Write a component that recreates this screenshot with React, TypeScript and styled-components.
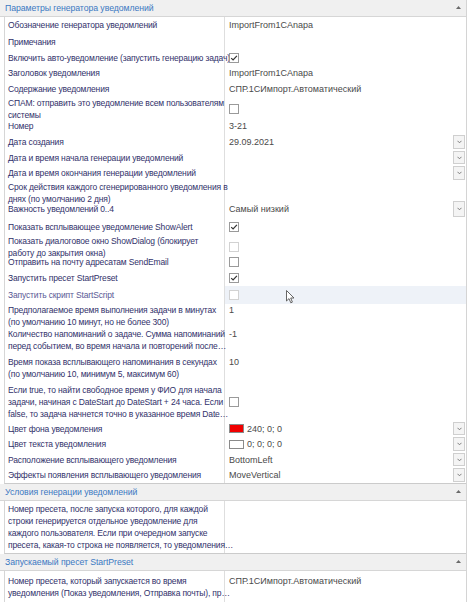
import styled, { createGlobalStyle } from 'styled-components';

const GlobalStyle = createGlobalStyle`
  html, body {
    margin: 0;
    padding: 0;
    background: #ffffff;
  }
  body {
    font-family: 'Liberation Sans', Arial, sans-serif;
  }
`;

type Check = 'on' | 'off' | 'dis';

type RowData = {
  label: string;
  h: number;
  value?: string;
  check?: Check;
  drop?: boolean;
  swatch?: string;
  top?: boolean;
  dim?: boolean;
  hover?: boolean;
};

const mainRows: RowData[] = [
  { label: 'Обозначение генератора уведомлений', h: 16, value: 'ImportFrom1CAnapa' },
  { label: 'Примечания', h: 17 },
  { label: 'Включить авто-уведомление (запустить генерацию задач)', h: 15, check: 'on' },
  { label: 'Заголовок уведомления', h: 16, value: 'ImportFrom1CAnapa' },
  { label: 'Содержание уведомления', h: 16, value: 'СПР.1СИмпорт.Автоматический' },
  { label: 'СПАМ: отправить это уведомление всем пользователям\nсистемы', h: 20, check: 'off' },
  { label: 'Номер', h: 17, value: '3-21' },
  { label: 'Дата создания', h: 16, value: '29.09.2021', drop: true },
  { label: 'Дата и время начала генерации уведомлений', h: 15, drop: true },
  { label: 'Дата и время окончания генерации уведомлений', h: 16, drop: true },
  { label: 'Срок действия каждого сгенерированного уведомления в\nднях (по умолчанию 2 дня)', h: 19 },
  { label: 'Важность уведомлений 0..4', h: 18, value: 'Самый низкий', drop: true },
  { label: 'Показать всплывающее уведомление ShowAlert', h: 17, check: 'on' },
  { label: 'Показать диалоговое окно ShowDialog (блокирует\nработу до закрытия окна)', h: 18, check: 'dis' },
  { label: 'Отправить на почту адресатам SendEmail', h: 17, check: 'off' },
  { label: 'Запустить пресет StartPreset', h: 16, check: 'on' },
  { label: 'Запустить скрипт StartScript', h: 18, check: 'dis', dim: true, hover: true },
  { label: 'Предполагаемое время выполнения задачи в минутах\n(по умолчанию 10 минут, но не более 300)', h: 22, value: '1', top: true },
  { label: 'Количество напоминаний о задаче. Сумма напоминаний\nперед событием, во время начала и повторений после…', h: 27, value: '-1', top: true },
  { label: 'Время показа всплывающего напоминания в секундах\n(по умолчанию 10, минимум 5, максимум 60)', h: 30, value: '10', top: true },
  { label: 'Если true, то найти свободное время у ФИО для начала\nзадачи, начиная с DateStart до DateStart + 24 часа. Если\nfalse, то задача начнется точно в указанное время Date…', h: 38, check: 'off' },
  { label: 'Цвет фона уведомления', h: 15, value: '240; 0; 0', swatch: '#f00000', drop: true },
  { label: 'Цвет текста уведомления', h: 16, value: '0; 0; 0; 0', swatch: '#ffffff', drop: true },
  { label: 'Расположение всплывающего уведомления', h: 15, value: 'BottomLeft', drop: true },
  { label: 'Эффекты появления всплывающего уведомления', h: 16, value: 'MoveVertical', drop: true },
];

const conditionRows: RowData[] = [
  {
    label:
      'Номер пресета, после запуска которого, для каждой\nстроки генерируется отдельное уведомление для\nкаждого пользователя. Если при очередном запуске\nпресета, какая-то строка не появляется, то уведомления…',
    h: 52,
  },
];

const presetRows: RowData[] = [
  {
    label: 'Номер пресета, который запускается во время\nуведомления (Показ уведомления, Отправка почты), пр…',
    h: 31,
    value: 'СПР.1СИмпорт.Автоматический',
    top: true,
  },
];

const CheckBox = ({ state }: { state: Check }) => (
  <svg width="10" height="10" viewBox="0 0 10 10">
    <rect
      x="0.5"
      y="0.5"
      width="9"
      height="9"
      fill="#ffffff"
      stroke={state === 'dis' ? '#d2d2d2' : '#9a9a9a'}
    />
    {state === 'on' && (
      <path d="M2.2 5.1 L4.1 7 L7.9 2.8" fill="none" stroke="#333333" strokeWidth="1.2" />
    )}
  </svg>
);

const Chevron = () => (
  <svg width="5" height="4" viewBox="0 0 5 4">
    <path d="M0.5 0.8 L2.5 2.8 L4.5 0.8" fill="none" stroke="#707070" strokeWidth="0.9" />
  </svg>
);

const UpArrow = () => (
  <svg width="5" height="3" viewBox="0 0 5 3">
    <path d="M0 3 L2.5 0 L5 3 Z" fill="#6a6a6a" />
  </svg>
);

const Pointer = () => (
  <svg width="10" height="14" viewBox="0 0 10 14">
    <path
      d="M0.5 0.5 L0.5 11 L3 8.6 L4.8 12.8 L6.4 12.1 L4.7 8 L8 8 Z"
      fill="#ffffff"
      stroke="#555555"
      strokeWidth="0.9"
      strokeLinejoin="round"
    />
  </svg>
);

const Row = ({ row }: { row: RowData }) => {
  const lines = row.label.split('\n').length;
  const pad = row.top ? Math.max(0, (row.h - lines * 12) / 2) : 0;
  return (
    <RowLine $h={row.h}>
      <Label $dim={row.dim}>{row.label}</Label>
      <Value $top={row.top} $pad={pad} $hover={row.hover}>
        {row.check && <CheckBox state={row.check} />}
        {row.swatch && <Swatch $color={row.swatch} />}
        {row.value && <ValueText>{row.value}</ValueText>}
        {row.drop && (
          <DropButton>
            <Chevron />
          </DropButton>
        )}
      </Value>
    </RowLine>
  );
};

const Category = ({ title, rows }: { title: string; rows: RowData[] }) => (
  <section>
    <Header>
      <span>{title}</span>
      <UpArrow />
    </Header>
    <Body>
      {rows.map((r, i) => (
        <Row key={i} row={r} />
      ))}
    </Body>
  </section>
);

const App = (): JSX.Element => {
  return (
    <>
      <GlobalStyle />
      <Page>
        <Category title="Параметры генератора уведомлений" rows={mainRows} />
        <Category title="Условия генерации уведомлений" rows={conditionRows} />
        <Category title="Запускаемый пресет StartPreset" rows={presetRows} />
        <Cursor>
          <Pointer />
        </Cursor>
      </Page>
    </>
  );
};

const Page = styled.div`
  box-sizing: border-box;
  height: 602px;
  overflow: hidden;
  position: relative;
  width: 467px;
  border-right: 1px solid #d4d4d4;
  background: #ffffff;
`;

const Header = styled.div`
  align-items: center;
  background: #f0f0f0;
  border-bottom: 1px solid #d6d6d6;
  color: #3b78c2;
  display: flex;
  font-size: 8.7px;
  height: 16px;
  justify-content: space-between;
  letter-spacing: -0.05px;
  padding: 0 5px 0 5px;

  svg {
    margin-bottom: 1px;
  }
`;

const Body = styled.div`
  border-bottom: 1px solid #cbcbcb;
  border-left: 1px solid #d6d6d6;
  margin-left: 4px;
`;

const RowLine = styled.div<{ $h: number }>`
  display: grid;
  grid-template-columns: 220px 1fr;
  height: ${(p) => p.$h}px;
`;

const Label = styled.div<{ $dim?: boolean }>`
  align-items: center;
  border-right: 1px solid #dedede;
  box-sizing: border-box;
  color: ${(p) => (p.$dim ? '#5a5a96' : '#31316a')};
  display: flex;
  font-size: 8.5px;
  letter-spacing: -0.15px;
  line-height: 12px;
  padding-left: 3px;
  white-space: pre;
`;

const Value = styled.div<{ $top?: boolean; $pad: number; $hover?: boolean }>`
  align-items: ${(p) => (p.$top ? 'flex-start' : 'center')};
  background: ${(p) => (p.$hover ? '#eef2f8' : 'transparent')};
  box-sizing: border-box;
  color: #4a4a4a;
  display: flex;
  font-size: 9px;
  gap: 3px;
  line-height: 12px;
  padding: ${(p) => p.$pad}px 1px 0 4px;
`;

const ValueText = styled.span`
  white-space: nowrap;
`;

const Swatch = styled.span<{ $color: string }>`
  background: ${(p) => p.$color};
  border: 1px solid #8a8a8a;
  box-sizing: border-box;
  display: inline-block;
  height: 9px;
  width: 15px;
`;

const DropButton = styled.div`
  align-items: center;
  align-self: center;
  background: #f4f4f4;
  border: 1px solid #cfcfcf;
  box-sizing: border-box;
  display: flex;
  height: calc(100% - 2px);
  justify-content: center;
  margin-left: auto;
  width: 12px;
`;

const Cursor = styled.div`
  left: 286px;
  position: absolute;
  top: 290px;
`;

export default App;
